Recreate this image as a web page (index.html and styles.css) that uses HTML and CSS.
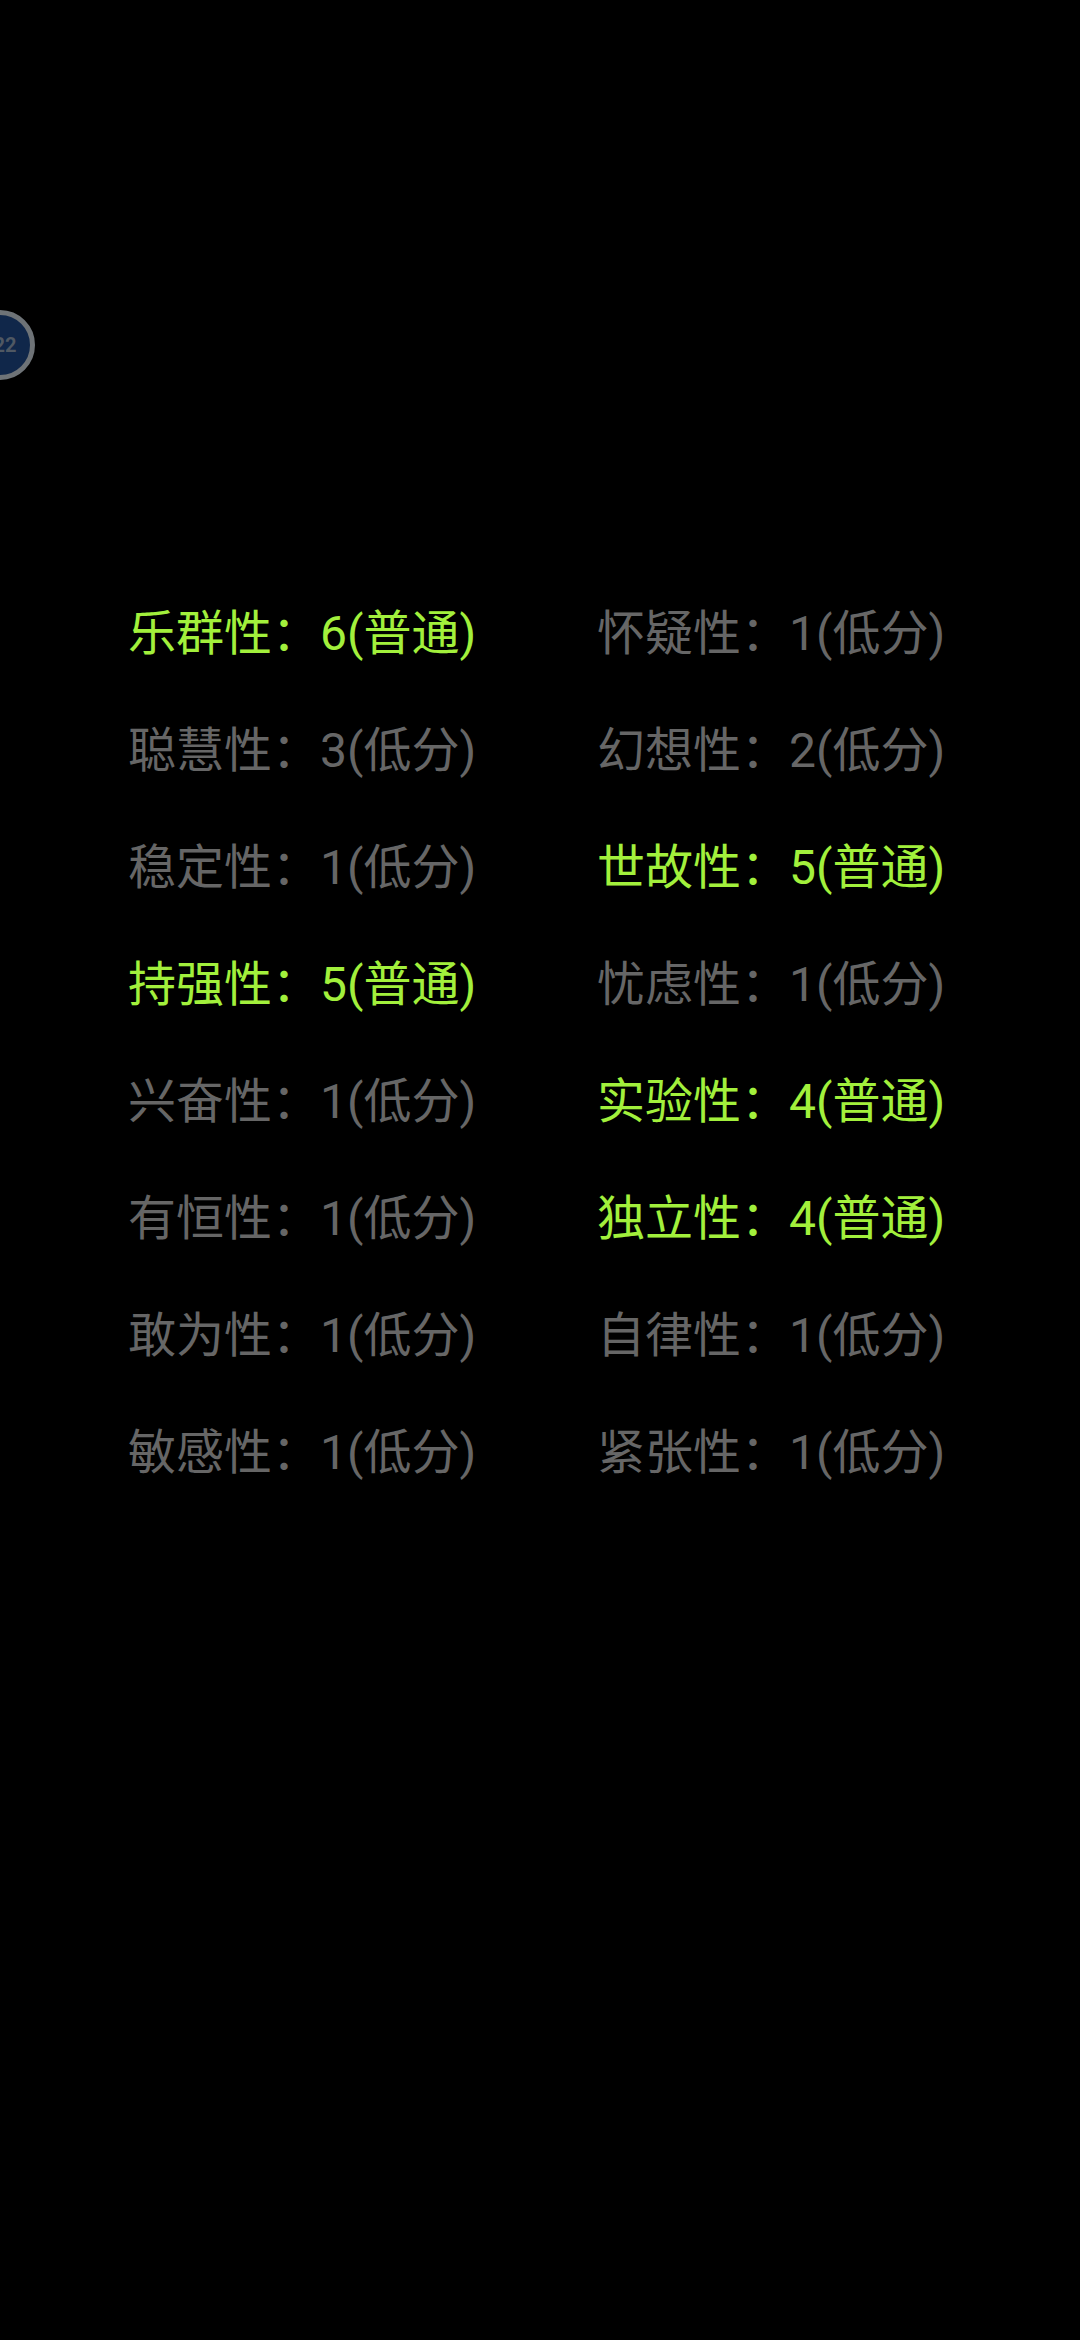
FILE: index.html
```html
<!DOCTYPE html>
<html lang="zh-CN">
  <head>
    <meta charset="UTF-8" />
    <meta name="viewport" content="width=device-width, initial-scale=1.0" />
    <title>16PF</title>
    <link rel="stylesheet" href="styles.css">
  </head>
  <body>
    <div class="float-ball"><span>22</span></div>
    <main class="scores">
      <p class="score high">乐群性<span class="colon">：</span>6(普通)</p>
      <p class="score">怀疑性<span class="colon">：</span>1(低分)</p>
      <p class="score">聪慧性<span class="colon">：</span>3(低分)</p>
      <p class="score">幻想性<span class="colon">：</span>2(低分)</p>
      <p class="score">稳定性<span class="colon">：</span>1(低分)</p>
      <p class="score high">世故性<span class="colon">：</span>5(普通)</p>
      <p class="score high">持强性<span class="colon">：</span>5(普通)</p>
      <p class="score">忧虑性<span class="colon">：</span>1(低分)</p>
      <p class="score">兴奋性<span class="colon">：</span>1(低分)</p>
      <p class="score high">实验性<span class="colon">：</span>4(普通)</p>
      <p class="score">有恒性<span class="colon">：</span>1(低分)</p>
      <p class="score high">独立性<span class="colon">：</span>4(普通)</p>
      <p class="score">敢为性<span class="colon">：</span>1(低分)</p>
      <p class="score">自律性<span class="colon">：</span>1(低分)</p>
      <p class="score">敏感性<span class="colon">：</span>1(低分)</p>
      <p class="score">紧张性<span class="colon">：</span>1(低分)</p>
    </main>
  </body>
</html>
```
FILE: styles.css
```css
* {
  box-sizing: border-box;
}

body {
  margin: 0;
  height: 2340px;
  overflow: hidden;
  background-color: #000;
  font-family: Roboto, "Noto Sans CJK SC", sans-serif;
}

/* floating ball, half hidden past the left edge */
.float-ball {
  position: absolute;
  top: 310px;
  left: -35px;
  width: 70px;
  height: 70px;
  border: 5px solid #6e7377;
  border-radius: 50%;
  background-color: #10274a;
  display: flex;
  align-items: center;
  justify-content: center;
}

.float-ball span {
  margin-left: 10px;
  font-size: 20px;
  font-weight: 700;
  color: #4f5863;
}

.scores {
  display: grid;
  grid-template-columns: 469px 1fr;
  grid-auto-rows: 117px;
  padding: 575px 0 0 128px;
}

.score {
  margin: 0;
  font-size: 48px;
  line-height: 117px;
  white-space: nowrap;
  color: #666;
}

.score.high {
  color: #a2f03c;
}

/* the TC face centres the full-width colon in its box */
.colon {
  font-family: "Noto Sans CJK TC", sans-serif;
  line-height: 0;
}
```
